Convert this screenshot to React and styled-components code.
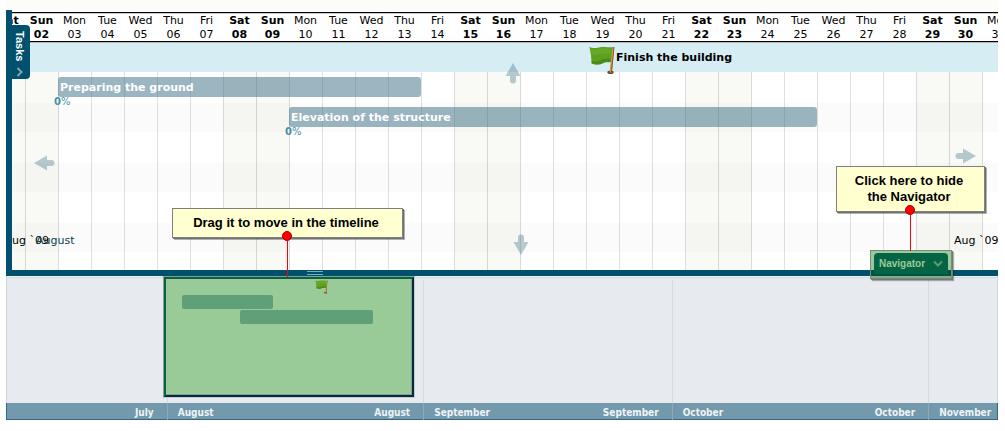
import React from "react";
import styled, { createGlobalStyle } from "styled-components";

const DAY = 33;
const NAMES = ["Sat", "Sun", "Mon", "Tue", "Wed", "Thu", "Fri"];
const DAYS = Array.from({ length: 31 }, (_, i) => ({
  name: NAMES[i % 7],
  date: String(i + 1).padStart(2, "0"),
  weekend: i % 7 < 2,
}));

const TASKS = [
  { name: "Preparing the ground", from: 3, span: 11, done: 0 },
  { name: "Elevation of the structure", from: 10, span: 16, done: 0 },
];

const MONTHS = [
  { end: "July", size: 160 },
  { start: "August", end: "August", size: 257 },
  { start: "September", end: "September", size: 249 },
  { start: "October", end: "October", size: 257 },
  { start: "November", size: 69 },
];
const MONTH_COLUMNS = MONTHS.map((m) => `minmax(0, ${m.size}fr)`).join(" ");

const Global = createGlobalStyle`
  *, *::before, *::after { box-sizing: border-box; }
  body {
    margin: 0;
    background: #fff;
    color: #000;
    font-family: "DejaVu Sans", sans-serif;
    font-size: 11px;
  }
  button { font: inherit; border: 0; padding: 0; background: none; color: inherit; cursor: pointer; }
`;

const Page = styled.main`
  position: relative;
  padding: 0 7px 0 6px;
`;

const TopStrip = styled.div`
  height: 10px;
  background: #fcfdf8;
`;

const Board = styled.section`
  position: relative;
  border-left: 6px solid #00506e;
  border-bottom: 6px solid #00506e;
`;

const Clip = styled.div`
  overflow: hidden;
  padding-top: 2px;
  background: #fcfdf8;
`;

const DayRow = styled.header`
  height: 31px;
  overflow: hidden;
  background: #fff;
  border-top: 1px solid #000;
  border-bottom: 1px solid #b4b4b4;
  box-shadow: inset 0 1px #c8c8c8, inset 0 -1px #000;
`;

const Days = styled.div`
  display: grid;
  grid-auto-flow: column;
  grid-auto-columns: ${DAY}px;
  margin-left: -20px;
`;

const Day = styled.div`
  padding-top: 1px;
  text-align: center;
  line-height: 14px;
  font-weight: ${(p) => (p.$weekend ? 700 : 400)};
`;

const Milestones = styled.div`
  height: 29px;
  background: #d7edf4;
`;

const Milestone = styled.div`
  position: absolute;
  z-index: 2;
  top: 36px;
  left: 577px;
  display: flex;
  gap: 1px;
  font-weight: 700;
  line-height: 24px;
`;

const Field = styled.div`
  display: flex;
  height: 198px;
  overflow: hidden;
  background: repeating-linear-gradient(#fff 0 31px, #fbfbfb 31px 60px);
`;

const Columns = styled(Days)`
  flex: none;
  grid-template-rows: 5px 30px 30px 1fr;
  grid-template-columns: repeat(31, ${DAY}px);
`;

const Column = styled.div`
  grid-row: 1 / -1;
  grid-column: ${(p) => p.$n};
  border-right: 1px solid rgba(0, 0, 0, 0.12);
  margin-right: -1px;
  background: ${(p) => (p.$weekend ? "rgba(170, 185, 110, 0.07)" : "transparent")};
`;

const Task = styled.div`
  z-index: 1;
  grid-row: ${(p) => p.$row};
  grid-column: ${(p) => p.$from} / span ${(p) => p.$span};
`;

const TaskBar = styled.div`
  height: 20px;
  padding-left: 2px;
  border-radius: 3px;
  background: rgba(64, 113, 137, 0.52);
  color: #fff;
  font-weight: 700;
  line-height: 21px;
`;

const Done = styled.div`
  margin-left: -4px;
  color: #4a8fa5;
  font-size: 10px;
  line-height: 10px;
`;

const TasksTab = styled.button`
  && {
    position: absolute;
    z-index: 3;
    top: 15px;
    left: 0;
    display: flex;
    flex-direction: column;
    align-items: center;
    gap: 6px;
    width: 18px;
    height: 54px;
    padding: 6px 3px 0 0;
    border-radius: 0 4px 4px 0;
    background: #00506e;
    color: #fff;
    font: 700 11px/16px "Liberation Sans", sans-serif;
  }
  span { writing-mode: vertical-rl; }
`;

const Pan = styled.button`
  && {
    position: absolute;
    z-index: 2;
    display: flex;
    left: ${(p) => p.$x};
    right: ${(p) => p.$right};
    top: ${(p) => p.$y};
  }
  svg { transform: rotate(${(p) => p.$turn}deg); }
`;

const MonthMark = styled.span`
  position: absolute;
  z-index: 2;
  top: 224px;
  left: ${(p) => p.$x};
  max-width: ${(p) => p.$max};
  overflow: hidden;
  white-space: nowrap;
  direction: ${(p) => p.$dir};
  line-height: 14px;
  color: ${(p) => p.$color || "#000"};
`;

const Grip = styled.span`
  position: absolute;
  bottom: -5px;
  left: 295px;
  width: 16px;
  height: 4px;
  border: solid #7fa8b8;
  border-width: 1px 0;
`;

const Navigator = styled.section`
  position: relative;
  display: flex;
  flex-direction: column;
`;

const Overview = styled.div`
  display: grid;
  grid-template-columns: ${MONTH_COLUMNS};
  height: 127px;
  padding-top: 4px;
  background: #e7ebef;
  border: solid #d0d6da;
  border-width: 0 1px;
  box-shadow: inset 0 1px #eef1f3, inset 0 2px #d5dade;
`;

const OverviewMonth = styled.div`
  & + & { border-left: 1px solid #d5dbdf; }
`;

const MonthBar = styled.footer`
  display: grid;
  grid-template-columns: ${MONTH_COLUMNS};
  height: 17px;
  background: #7399ac;
  border: 1px solid #2f6a82;
  border-top: 0;
  color: #eef3f6;
  font: 700 10px/19px "DejaVu Sans Condensed", "DejaVu Sans", sans-serif;
`;

const Month = styled.div`
  display: flex;
  justify-content: space-between;
  padding: 0 13px 0 10px;
  & + & { border-left: 1px solid #8caab9; }
`;

const Window = styled.div`
  position: absolute;
  z-index: 2;
  top: 0;
  left: 157px;
  width: 252px;
  height: 122px;
  border: 1px solid #8d9c92;
  border-right-color: #c4ccd0;
  border-bottom-color: #c4ccd0;
`;

const WindowPane = styled.div`
  display: grid;
  grid-template-rows: 15px 14px 14px;
  row-gap: 1px;
  height: 100%;
  border: 2px solid #056443;
  border-right-color: #022c3f;
  border-bottom-color: #022c3f;
  background: #99cb99;
  box-shadow: inset -1px -1px #8d9c92;
`;

const MiniFlag = styled.div`
  padding: 1px 0 0 149px;
  svg { display: block; }
`;

const MiniBar = styled.div`
  margin-left: ${(p) => p.$start}px;
  width: ${(p) => p.$length}px;
  border-radius: 2px;
  background: #60a079;
`;

const HandleFrame = styled.div`
  position: absolute;
  z-index: 3;
  top: 240px;
  right: 46px;
  width: 82px;
  height: 29px;
  padding: 2px 3px;
  border: 1px solid #788a7c;
  background: linear-gradient(#99cb99 0 19px, #00553f 19px 25px, #86a98f 25px);
  box-shadow: 1px 1px #6f7a74, 2px 2px 1px rgba(0, 0, 0, 0.3);
`;

const Handle = styled.button`
  && {
    display: flex;
    align-items: center;
    justify-content: space-between;
    width: 100%;
    height: 21px;
    padding: 0 5px;
    border-radius: 4px 4px 0 0;
    background: #056443;
    color: #99cb99;
    font: 700 10px/18px "Liberation Sans", sans-serif;
  }
`;

const Callout = styled.aside`
  position: absolute;
  z-index: 4;
  top: ${(p) => p.$top};
  left: ${(p) => p.$left};
  right: ${(p) => p.$right};
  width: ${(p) => p.$width};
  padding: 6px 3px 6px 0;
  border: 1px solid #808080;
  background: #ffffd0;
  box-shadow: 1px 1px #707070, 2px 2px rgba(0, 0, 0, 0.3);
  text-align: center;
  font: 700 13px/16px "Liberation Sans", sans-serif;
`;

const Pin = styled.span`
  position: absolute;
  left: 50%;
  bottom: -4px;
  margin-left: -6px;
  width: 10px;
  height: 10px;
  border: 1px solid #a00000;
  border-radius: 50%;
  background: #f00;
  &::after {
    content: "";
    position: absolute;
    top: 8px;
    left: 4px;
    width: 1px;
    height: ${(p) => p.$drop}px;
    background: #f00;
  }
`;

function Flag({ width, height }) {
  return (
    <svg width={width} height={height} viewBox="0 0 26 29" aria-hidden="true">
      <ellipse cx="21.5" cy="26.2" rx="3.2" ry="1.8" fill="#65463f" />
      <path d="M23 1h2.400l-2.600 25.400h-2.200z" fill="#d09a48" />
      <path d="M24.600 1h.8l-2.400 25h-1z" fill="#7d5021" />
      <path d="M.4 1C5 3 8 1.600 13 1c4-.4 6 .6 10.400.2L21.800 16c-3 .8-5-.4-8 1.200-4 2-7 2-11.400 0C2.600 11 1.600 6 .4 1z" fill="#5d9f20" />
      <path d="M1.200 2.600C6 4.600 9 2.600 14 2.600c3 0 5 .4 8.400 0L22 7.500c-5 1-8-.6-12 .6-3 1.400-5 1-8 0z" fill="#68a829" />
      <path d="M3 15c4 1.200 7 0 10-1.400 3-1.200 5-.4 8.800-1L21.600 16c-4 .2-5-.6-8 1.200-3 1.200-6 1.200-10.800 0z" fill="#4b8a18" />
    </svg>
  );
}

function Arrow() {
  return (
    <svg width="22" height="16" viewBox="0 0 22 16" aria-hidden="true">
      <path d="M1 8L14 .5V5h4.500a3 3 0 0 1 0 6H14v4.500z" fill="#4f7d91" fillOpacity=".4" />
    </svg>
  );
}

function Chevron({ color, turn }) {
  return (
    <svg width="10" height="10" viewBox="0 0 10 10" aria-hidden="true">
      <path d="M1 2.500L5 6.500 9 2.500" transform={`rotate(${turn} 5 5)`} fill="none" stroke={color} strokeWidth="2" />
    </svg>
  );
}

export default function App() {
  return (
    <>
      <Global />
      <Page>
        <TopStrip />
        <Board>
          <Clip>
            <DayRow>
              <Days>
                {DAYS.map((d) => (
                  <Day key={d.date} $weekend={d.weekend}>
                    {d.name}
                    <br />
                    {d.date}
                  </Day>
                ))}
              </Days>
            </DayRow>
            <Milestones />
            <Field>
              <Columns>
                {DAYS.map((d, i) => (
                  <Column key={d.date} $n={i + 1} $weekend={d.weekend} />
                ))}
                {TASKS.map((t, i) => (
                  <Task key={t.name} $row={i + 2} $from={t.from} $span={t.span}>
                    <TaskBar>{t.name}</TaskBar>
                    <Done><b>{t.done}</b>%</Done>
                  </Task>
                ))}
              </Columns>
            </Field>
          </Clip>
          <Milestone>
            <Flag width={26} height={29} />
            Finish the building
          </Milestone>
          <TasksTab type="button">
            <span>Tasks</span>
            <Chevron color="#7fa3b3" turn={-90} />
          </TasksTab>
          <Pan type="button" aria-label="Earlier" $x="21px" $y="145px" $turn={0}><Arrow /></Pan>
          <Pan type="button" aria-label="Later" $right="21px" $y="138px" $turn={180}><Arrow /></Pan>
          <Pan type="button" aria-label="Up" $x="490px" $y="55px" $turn={90}><Arrow /></Pan>
          <Pan type="button" aria-label="Down" $x="498px" $y="227px" $turn={-90}><Arrow /></Pan>
          <MonthMark $x="0" $max="37px" $dir="rtl">Aug `09</MonthMark>
          <MonthMark $x="24px" $color="#10404a">August</MonthMark>
          <MonthMark $x="calc(100% - 44px)" $max="44px">Aug `09</MonthMark>
          <Grip />
          <HandleFrame>
            <Handle type="button">
              Navigator
              <Chevron color="#5a9a76" turn={0} />
            </Handle>
          </HandleFrame>
        </Board>
        <Navigator>
          <Overview>
            {MONTHS.map((m) => (
              <OverviewMonth key={m.size + (m.start || "")} />
            ))}
          </Overview>
          <MonthBar>
            {MONTHS.map((m) => (
              <Month key={m.size + (m.start || "")}>
                <span>{m.start}</span>
                <span>{m.end}</span>
              </Month>
            ))}
          </MonthBar>
          <Window>
            <WindowPane>
              <MiniFlag><Flag width={13} height={14} /></MiniFlag>
              <MiniBar $start={16} $length={91} />
              <MiniBar $start={74} $length={133} />
            </WindowPane>
          </Window>
        </Navigator>
        <Callout $top="208px" $left="172px" $width="231px">
          Drag it to move in the timeline
          <Pin $drop={37} />
        </Callout>
        <Callout $top="166px" $right="20px" $width="149px">
          Click here to hide
          <br />
          the Navigator
          <Pin $drop={37} />
        </Callout>
      </Page>
    </>
  );
}
